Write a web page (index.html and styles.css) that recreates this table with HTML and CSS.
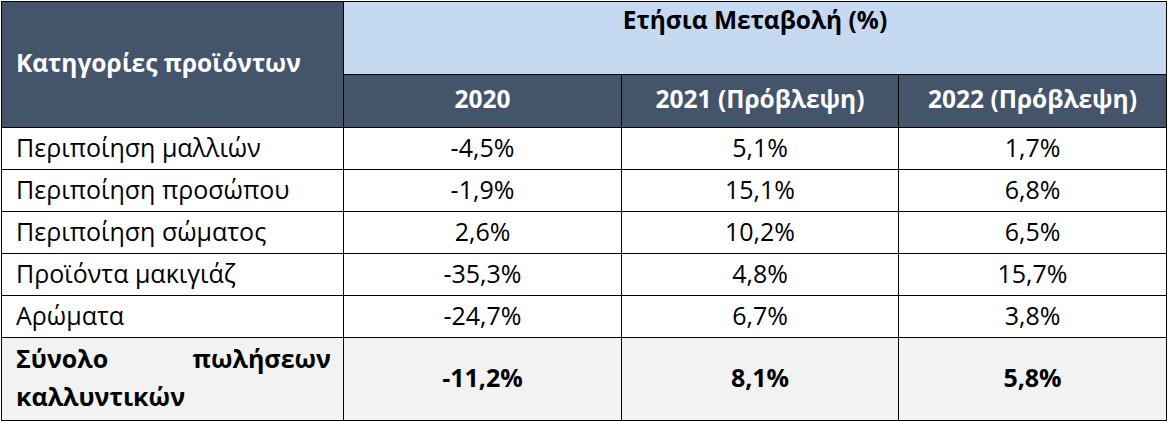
FILE: index.html
```html
<!DOCTYPE html>
<html lang="el">
<head>
<meta charset="utf-8">
<title>Ετήσια Μεταβολή</title>
<link rel="stylesheet" href="styles.css">
</head>
<body>
<table class="sales">
  <colgroup>
    <col class="c-cat">
    <col class="c-y1">
    <col class="c-y2">
    <col class="c-y3">
  </colgroup>
  <thead>
    <tr class="h1">
      <th class="cat" rowspan="2">Κατηγορίες προϊόντων</th>
      <th class="group" colspan="3">Ετήσια Μεταβολή (%)</th>
    </tr>
    <tr class="h2">
      <th>2020</th>
      <th>2021 (Πρόβλεψη)</th>
      <th>2022 (Πρόβλεψη)</th>
    </tr>
  </thead>
  <tbody>
    <tr><td class="name">Περιποίηση μαλλιών</td><td>-4,5%</td><td>5,1%</td><td>1,7%</td></tr>
    <tr><td class="name">Περιποίηση προσώπου</td><td>-1,9%</td><td>15,1%</td><td>6,8%</td></tr>
    <tr><td class="name">Περιποίηση σώματος</td><td>2,6%</td><td>10,2%</td><td>6,5%</td></tr>
    <tr><td class="name">Προϊόντα μακιγιάζ</td><td>-35,3%</td><td>4,8%</td><td>15,7%</td></tr>
    <tr><td class="name">Αρώματα</td><td>-24,7%</td><td>6,7%</td><td>3,8%</td></tr>
    <tr class="total"><td class="name">Σύνολο πωλήσεων καλλυντικών</td><td>-11,2%</td><td>8,1%</td><td>5,8%</td></tr>
  </tbody>
</table>
</body>
</html>
```

FILE: styles.css
```css
html, body {
  margin: 0;
  padding: 0;
  background: #ffffff;
}
body {
  padding: 1px 0 0 1px;
  font-family: "Open Sans", "Noto Sans", sans-serif;
  color: #000000;
}
.sales {
  border-collapse: collapse;
  table-layout: fixed;
  width: 1166px;
  font-size: 25px;
  line-height: 32px;
}
.c-cat { width: 342px; }
.c-y1 { width: 278px; }
.c-y2 { width: 277px; }
.c-y3 { width: 268px; }
.sales th,
.sales td {
  border: 1px solid #000000;
  padding: 0 0 4px 0;
  text-align: center;
  vertical-align: middle;
}
.h1 { height: 73px; }
.h2 { height: 53px; }
.sales th {
  background: #44546a;
  color: #ffffff;
  font-weight: 700;
  font-size: 24.5px;
}
.sales th.cat {
  text-align: left;
  padding-left: 14px;
}
.sales th.group {
  background: #c5d9f1;
  color: #000000;
  vertical-align: top;
  padding: 2px 0 0 0;
}
.sales tbody tr { height: 42px; }
.sales td.name {
  text-align: left;
  padding-left: 14px;
}
.sales tr.total { height: 83px; }
.sales tr.total td {
  background: #f2f2f2;
  font-weight: 700;
}
.sales tr.total td.name {
  text-align: justify;
  text-align-last: left;
  padding-right: 12px;
  line-height: 38px;
}
```
